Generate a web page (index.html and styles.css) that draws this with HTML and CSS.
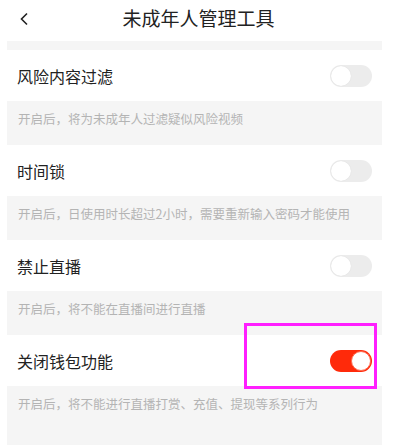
FILE: index.html
```html
<!DOCTYPE html>
<html lang="zh">
<head>
<meta charset="utf-8">
<link rel="stylesheet" href="styles.css">
</head>
<body>
<div class="page">
  <header class="header">
    <svg class="back" width="10" height="14" viewBox="0 0 10 14"><path d="M8 1.5 L2.5 7 L8 12.5" fill="none" stroke="#222" stroke-width="1.6"/></svg>
    <h1 class="title">未成年人管理工具</h1>
  </header>
  <main class="list">
    <div class="gap"></div>
    <div class="row"><span class="label">风险内容过滤</span><span class="switch"><span class="knob"></span></span></div>
    <div class="desc">开启后，将为未成年人过滤疑似风险视频</div>
    <div class="row"><span class="label">时间锁</span><span class="switch"><span class="knob"></span></span></div>
    <div class="desc">开启后，日使用时长超过2小时，需要重新输入密码才能使用</div>
    <div class="row"><span class="label">禁止直播</span><span class="switch"><span class="knob"></span></span></div>
    <div class="desc">开启后，将不能在直播间进行直播</div>
    <div class="row"><span class="label">关闭钱包功能</span><span class="switch on"><span class="knob"></span></span></div>
    <div class="desc last">开启后，将不能进行直播打赏、充值、提现等系列行为</div>
  </main>
  <div class="highlight"></div>
</div>
</body>
</html>
```
FILE: styles.css
```css
html, body {
  margin: 0;
  padding: 0;
  background: #fff;
}
body {
  font-family: "Noto Sans CJK SC", "Noto Sans", sans-serif;
  color: #222;
}
.page {
  position: relative;
  width: 397px;
  height: 445px;
  overflow: hidden;
}
.header {
  height: 41px;
  display: flex;
  align-items: center;
  justify-content: center;
  position: relative;
}
.back {
  position: absolute;
  left: 19px;
  top: 12px;
}
.title {
  margin: 0;
  font-size: 19px;
  font-weight: 400;
  line-height: 22px;
  margin-top: -5px;
  color: #222;
}
.list {
  margin: 0 15px 0 7px;
  background: #f5f5f5;
}
.gap {
  height: 9px;
}
.row {
  height: 51px;
  background: #fff;
  display: flex;
  align-items: center;
  justify-content: space-between;
  padding: 0 10px 0 10px;
}
.label {
  font-size: 16px;
  line-height: 20px;
  color: #222;
  margin-top: 1px;
}
.switch {
  width: 42px;
  height: 22px;
  border-radius: 11px;
  background: #ececec;
  position: relative;
  box-sizing: border-box;
}
.knob {
  position: absolute;
  left: 1px;
  top: 1px;
  width: 20px;
  height: 20px;
  border-radius: 50%;
  background: #fff;
  box-shadow: 0 0 1px rgba(0,0,0,0.12);
}
.switch.on {
  background: #ff2a0a;
}
.switch.on .knob {
  left: 21px;
  box-shadow: none;
  border: 1px solid #ff6a50;
  box-sizing: border-box;
}
.desc {
  height: 44px;
  box-sizing: border-box;
  padding: 10px 10px 0 11px;
  font-size: 12.5px;
  line-height: 16px;
  color: #b4b4b4;
  white-space: nowrap;
}
.desc.last {
  height: 60px;
}
.highlight {
  position: absolute;
  left: 244px;
  top: 323px;
  width: 133px;
  height: 66px;
  box-sizing: border-box;
  border: 3px solid #ff1fff;
}
```
